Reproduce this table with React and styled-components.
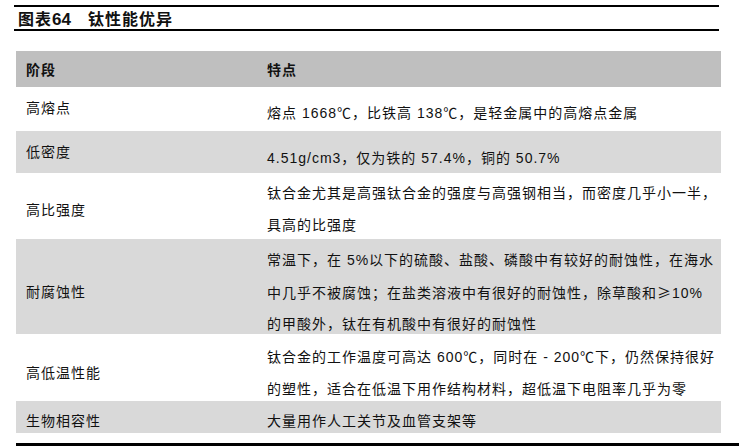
import React from "react";
import styled, { createGlobalStyle } from "styled-components";

const GlobalStyle = createGlobalStyle`
  html, body {
    margin: 0;
    padding: 0;
    background: #fff;
  }
  body {
    font-family: "Liberation Sans", "Noto Sans CJK SC", sans-serif;
    color: #111;
  }
`;

// row heights and text offsets follow the source table
const rows = [
  {
    name: "高熔点",
    height: 44,
    nameTop: 5,
    textTop: 10,
    lines: ["熔点 1668℃，比铁高 138℃，是轻金属中的高熔点金属"],
  },
  {
    name: "低密度",
    height: 42,
    nameTop: 5,
    textTop: 11,
    shaded: true,
    lines: ["4.51g/cm3，仅为铁的 57.4%，铜的 50.7%"],
  },
  {
    name: "高比强度",
    height: 66,
    nameTop: 21,
    textTop: 4,
    lines: [
      "钛合金尤其是高强钛合金的强度与高强钢相当，而密度几乎小一半，",
      "具高的比强度",
    ],
  },
  {
    name: "耐腐蚀性",
    height: 95,
    nameTop: 37,
    textTop: 5,
    shaded: true,
    lines: [
      "常温下，在 5%以下的硫酸、盐酸、磷酸中有较好的耐蚀性，在海水",
      "中几乎不被腐蚀；在盐类溶液中有很好的耐蚀性，除草酸和≥10%",
      "的甲酸外，钛在有机酸中有很好的耐蚀性",
    ],
  },
  {
    name: "高低温性能",
    height: 67,
    nameTop: 23,
    textTop: 7,
    lines: [
      "钛合金的工作温度可高达 600℃，同时在 - 200℃下，仍然保持很好",
      "的塑性，适合在低温下用作结构材料，超低温下电阻率几乎为零",
    ],
  },
  {
    name: "生物相容性",
    height: 32,
    nameTop: 4,
    textTop: 4,
    shaded: true,
    lines: ["大量用作人工关节及血管支架等"],
  },
];

// the ≥ sign comes from the CJK font, full width
const LineText = ({ text }) =>
  text.split(/(≥)/).map((part, i) =>
    part === "≥" ? <Wide key={i}>{part}</Wide> : part
  );

const App = () => {
  return (
    <Page>
      <GlobalStyle />
      <Title>
        图表<TitleNum>64</TitleNum>
        <TitleGap />钛性能优异
      </Title>
      <Table>
        <HeaderRow>
          <HeadCell>阶段</HeadCell>
          <HeadCell>特点</HeadCell>
        </HeaderRow>
        {rows.map((row) => (
          <Row key={row.name} $height={row.height} $shaded={row.shaded}>
            <NameCell $top={row.nameTop}>{row.name}</NameCell>
            <TextCell $top={row.textTop}>
              {row.lines.map((line) => (
                <Line key={line}>
                  <LineText text={line} />
                </Line>
              ))}
            </TextCell>
          </Row>
        ))}
      </Table>
      <BottomRule />
    </Page>
  );
};

const Page = styled.div`
  width: 752px;
  height: 446px;
  overflow: hidden;
  padding-top: 5px;
  box-sizing: border-box;
`;

const Title = styled.div`
  margin-left: 14px;
  width: 701px;
  border-top: 2px solid #000;
  border-bottom: 2px solid #000;
  padding: 3px 0 0 4px;
  height: 19px;
  line-height: 19px;
  font-size: 16px;
  font-weight: 700;
  letter-spacing: 1px;
  display: flex;
  align-items: center;
  white-space: nowrap;
`;

const TitleNum = styled.span`
  font-size: 17px;
  letter-spacing: 0;
`;

const TitleGap = styled.span`
  display: inline-block;
  width: 17px;
`;

const Table = styled.div`
  margin: 20px 0 0 16px;
  width: 705px;
  display: flex;
  flex-direction: column;
  font-size: 14px;
  letter-spacing: 1px;
`;

const HeaderRow = styled.div`
  display: grid;
  grid-template-columns: 241px 1fr;
  height: 36px;
  background: #bfbfbf;
`;

const HeadCell = styled.div`
  padding: 2px 0 0 10px;
  line-height: 34px;
  font-weight: 700;
`;

const Row = styled.div`
  display: grid;
  grid-template-columns: 241px 1fr;
  height: ${(p) => p.$height}px;
  background: ${(p) => (p.$shaded ? "#d9d9d9" : "#fff")};
`;

const NameCell = styled.div`
  padding: ${(p) => p.$top}px 0 0 10px;
  line-height: 32px;
  white-space: nowrap;
`;

const TextCell = styled.div`
  padding: ${(p) => p.$top}px 0 0 10px;
  display: flex;
  flex-direction: column;
`;

const Line = styled.div`
  line-height: 32px;
  height: 32px;
  white-space: nowrap;
`;

const Wide = styled.span`
  font-family: "Noto Sans CJK SC", sans-serif;
`;

const BottomRule = styled.div`
  margin: 10px 0 0 16px;
  width: 723px;
  height: 4px;
  background: #000;
`;

export default App;
